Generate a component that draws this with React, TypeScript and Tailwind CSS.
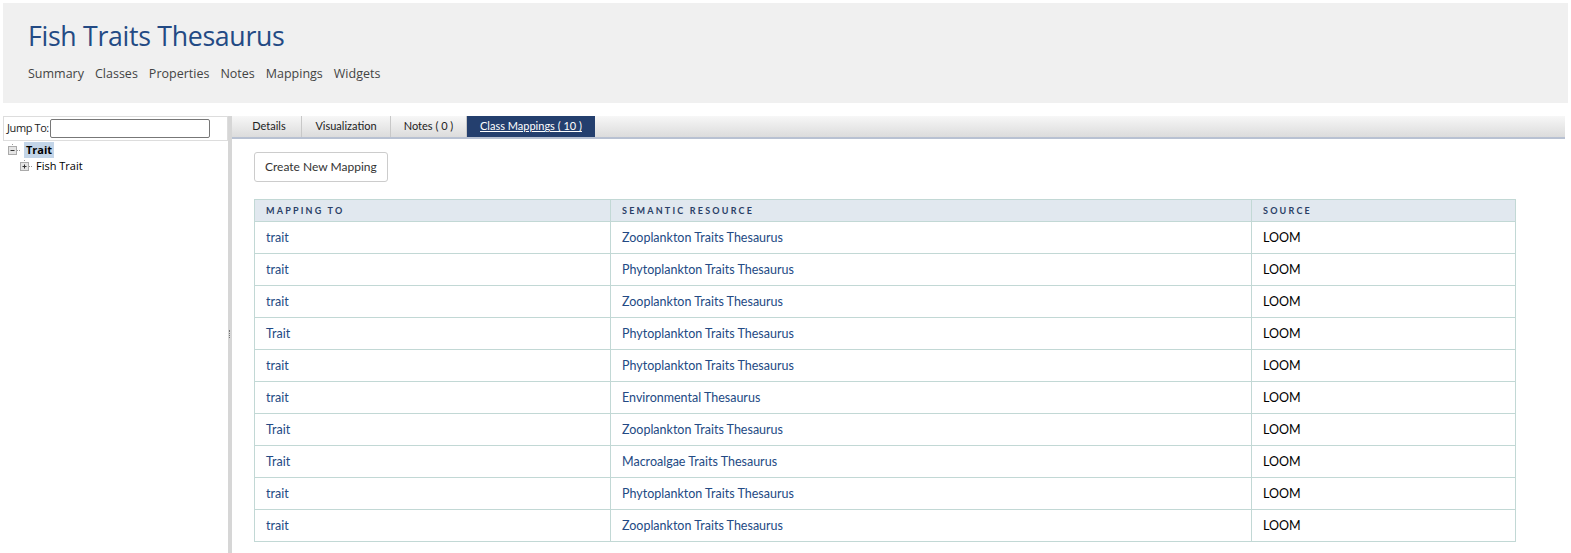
const NAV = ["Summary", "Classes", "Properties", "Notes", "Mappings", "Widgets"];

const TABS = [
  { label: "Details", w: "w-[65px]" },
  { label: "Visualization", w: "w-[89px]" },
  { label: "Notes ( 0 )", w: "w-[76px]" },
];

const ROWS: [string, string][] = [
  ["trait", "Zooplankton Traits Thesaurus"],
  ["trait", "Phytoplankton Traits Thesaurus"],
  ["trait", "Zooplankton Traits Thesaurus"],
  ["Trait", "Phytoplankton Traits Thesaurus"],
  ["trait", "Phytoplankton Traits Thesaurus"],
  ["trait", "Environmental Thesaurus"],
  ["Trait", "Zooplankton Traits Thesaurus"],
  ["Trait", "Macroalgae Traits Thesaurus"],
  ["trait", "Phytoplankton Traits Thesaurus"],
  ["trait", "Zooplankton Traits Thesaurus"],
];

function TreeBox({ open }: { open: boolean }) {
  return (
    <svg width="13" height="12" viewBox="0 0 13 12" className="shrink-0">
      <line x1="4.5" y1="0" x2="4.5" y2="2" stroke="#999" strokeDasharray="1 1" />
      <rect x="0.5" y="2.5" width="8" height="8" fill="#e4e4e4" stroke="#aaa" />
      <line x1="2.5" y1="6.5" x2="6.5" y2="6.5" stroke="#333" />
      {!open && <line x1="4.5" y1="4.5" x2="4.5" y2="8.5" stroke="#333" />}
      <line x1="9" y1="6.5" x2="13" y2="6.5" stroke="#999" strokeDasharray="1 1" />
    </svg>
  );
}

export default function App() {
  return (
    <div className="h-[553px] overflow-hidden bg-white font-['Lato',sans-serif]">
      <header className="mx-[3px] mt-[3px] h-[100px] bg-[#f0f0f0] pl-[25px] pt-[16px]">
        <h1 className="font-['Open_Sans',sans-serif] text-[26.7px] leading-[34px] tracking-[-0.3px] text-[#234a84]">
          Fish Traits Thesaurus
        </h1>
        <nav className="mt-[12px] flex gap-[11px] font-['Open_Sans',sans-serif] text-[12.5px] text-[#444]">
          {NAV.map((n) => (
            <span key={n}>{n}</span>
          ))}
        </nav>
      </header>

      <div className="mt-[13px] flex h-[437px]">
        <aside className="ml-[3px] w-[225px] font-['Open_Sans',sans-serif]">
          <div className="flex h-[25px] items-center border border-[#ddd] pl-[3px] text-[11px] text-[#222]">
            <span className="tracking-[-0.4px]">Jump To:</span>
            <input className="ml-[1px] h-[19px] w-[160px] rounded-[2px] border border-[#777] bg-white" />
          </div>
          <div className="pl-[5px] pt-[1px] text-[11px] text-black">
            <div className="flex items-center gap-[3px]">
              <TreeBox open />
              <span className="bg-[#c3d5e8] px-[2px] font-bold leading-[16px]">Trait</span>
            </div>
            <div className="flex items-center gap-[3px] pl-[12px]">
              <TreeBox open={false} />
              <span className="leading-[16px]">Fish Trait</span>
            </div>
          </div>
        </aside>

        <div className="relative w-[4px] bg-[#d6d6d6]">
          <div className="absolute left-[1px] top-[214px] h-[8px] w-[2px] border-l border-dotted border-[#777]" />
        </div>

        <main className="mr-[6px] flex-1">
          <div className="flex h-[23px] border-b-2 border-[#b8c1d2] bg-gradient-to-b from-[#f7f7f7] to-[#dcdcdc] pl-[5px] text-[11px] text-[#222]">
            {TABS.map((t) => (
              <div
                key={t.label}
                className={`${t.w} flex items-center justify-center border-r border-[#c8c8c8]`}
              >
                {t.label}
              </div>
            ))}
            <div className="flex w-[128px] items-center justify-center bg-[#243f6e] text-white underline">
              Class Mappings ( 10 )
            </div>
          </div>

          <div className="pl-[22px] pt-[13px]">
            <button className="h-[30px] rounded-[3px] border border-[#ccc] bg-white px-[10px] text-[12px] text-[#333]">
              Create New Mapping
            </button>

            <table className="mt-[17px] w-[1262px] table-fixed border-collapse text-[12.5px]">
              <thead>
                <tr className="h-[22px] bg-[#e1e8ef] text-left text-[9px] font-bold tracking-[2.2px] text-[#2a3f66]">
                  <th className="w-[356px] border border-[#c2d8d5] pl-[11px] font-bold">MAPPING TO</th>
                  <th className="w-[641px] border border-[#c2d8d5] pl-[11px] font-bold">SEMANTIC RESOURCE</th>
                  <th className="border border-[#c2d8d5] pl-[11px] font-bold">SOURCE</th>
                </tr>
              </thead>
              <tbody>
                {ROWS.map(([m, r], i) => (
                  <tr key={i} className="h-[32px]">
                    <td className="border border-[#c2d8d5] pl-[11px] pt-[1px] text-[#234a84]">{m}</td>
                    <td className="border border-[#c2d8d5] pl-[11px] pt-[1px] text-[#234a84]">{r}</td>
                    <td className="border border-[#c2d8d5] pl-[11px] pt-[1px] text-black">LOOM</td>
                  </tr>
                ))}
              </tbody>
            </table>
          </div>
        </main>
      </div>
    </div>
  );
}
